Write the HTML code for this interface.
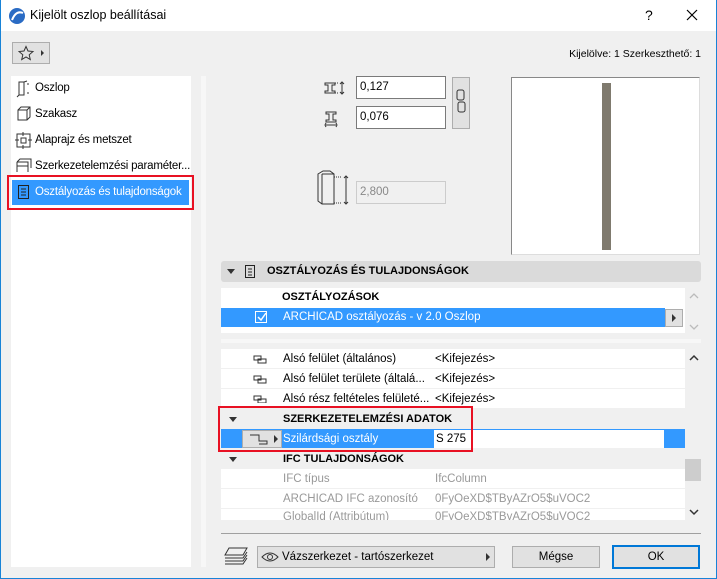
<!DOCTYPE html>
<html><head><meta charset="utf-8"><style>
*{margin:0;padding:0;box-sizing:border-box}
body{width:717px;height:579px;position:relative;overflow:hidden;background:#f0f0f0;font-family:"Liberation Sans","DejaVu Sans",sans-serif;font-size:11.5px;color:#000}
.a{position:absolute}
.win{position:absolute;left:0;top:0;width:717px;height:579px;border:1px solid #1883d7;border-top:none}
.row{position:absolute;left:221px;width:464px;height:20px;line-height:20px;background:#fff;border-bottom:1px solid #f0f0f0;white-space:nowrap}
.sec{background:#f0f0f0;font-weight:bold}
.t{position:absolute;left:62px}
.v{position:absolute;left:214px}
.g{color:#999}
.tri{position:absolute;left:8px;top:8px;width:0;height:0;border-left:4px solid transparent;border-right:4px solid transparent;border-top:5px solid #333}
.inp{position:absolute;background:#fff;border:1px solid #7a7a7a;height:23px;line-height:21px;padding-left:3px;font-size:11.5px}
.btn{position:absolute;background:#e1e1e1;border:1px solid #adadad;height:22px;line-height:20px;text-align:center}
.lt{position:absolute;left:35px;letter-spacing:-0.2px}
</style></head><body>
<div class="a" style="left:0;top:0;width:717px;height:31px;background:#fff"></div>
<svg class="a" style="left:8px;top:7px" width="18" height="18"><circle cx="9" cy="9" r="8" fill="#2a6bc4"/><path d="M4 13 Q8 3 15 6" stroke="#fff" stroke-width="2" fill="none"/></svg>
<div class="a" style="left:30px;top:8px;font-size:12.5px">Kijelölt oszlop beállításai</div>
<div class="a" style="left:645px;top:7px;font-size:14px">?</div>
<svg class="a" style="left:686px;top:9px" width="12" height="12" stroke="#000" stroke-width="1.2"><path d="M1 1L11 11M11 1L1 11"/></svg>
<div class="btn" style="left:12px;top:42px;width:38px;height:22px"></div>
<svg class="a" style="left:18px;top:45px" width="28" height="16" fill="none" stroke="#333"><path d="M8 1.5l2 4.5 5 .5-3.8 3.3 1.1 4.8L8 12l-4.3 2.6 1.1-4.8L1 6.5l5-.5z"/><path d="M23 5v6l3-3z" fill="#333" stroke="none"/></svg>
<div class="a" style="right:16px;top:48px;font-size:10.5px">Kijelölve: 1 Szerkeszthető: 1</div>
<!-- left panel -->
<div class="a" style="left:11px;top:76px;width:180px;height:491px;background:#fff"></div>
<div class="a" style="left:201px;top:76px;width:5px;height:491px;background:#f7f7f7"></div>
<div class="lt" style="top:82px">Oszlop</div>
<div class="lt" style="top:108px">Szakasz</div>
<div class="lt" style="top:134px">Alaprajz és metszet</div>
<div class="lt" style="top:160px">Szerkezetelemzési paraméter...</div>
<svg class="a" style="left:15px;top:80px" width="18" height="100" fill="none" stroke="#333"><path d="M4 2h5v13h-5zM4 15l-2 2M9 2l3-1M13 3v2M13 12v2"/><path d="M3 30l3-3h9v10l-3 3h-9zM3 30h9v10M12 30l3-3"/><rect x="2" y="54" width="13" height="13"/><rect x="6" y="58" width="5" height="5"/><path d="M8 52v4M8 65v4M0 60h4M13 60h4"/><path d="M2 82l3-3h11v9M2 82h11v10M2 82v10M13 86h-11"/></svg>
<div class="a" style="left:7px;top:175px;width:187px;height:35px;border:2px solid #e81123"></div>
<div class="a" style="left:11px;top:179px;width:179px;height:27px;background:#3399ff;border:1px solid #fff"></div>
<svg class="a" style="left:17px;top:184px" width="14" height="16" fill="none" stroke="#222"><rect x="1.5" y="1.5" width="10" height="13"/><path d="M4 5h5M4 8h5M4 11h5"/></svg>
<div class="lt" style="top:186px;color:#fff">Osztályozás és tulajdonságok</div>
<!-- top right -->
<svg class="a" style="left:323px;top:80px" width="28" height="50" fill="none" stroke="#333"><path d="M2 3h10v2h-3v6h3v2h-10v-2h3v-6h-3z"/><path d="M12 3h4M12 13h4" stroke-dasharray="1 1"/><path d="M19 2v12M17 4l2-2 2 2M17 12l2 2 2-2"/><path d="M3 32h10v2h-3v6h3v2h-10v-2h3v-6h-3z"/><path d="M3 45h10M3 43l-1 2 1 2M13 43l1 2-1 2"/></svg>
<div class="inp" style="left:356px;top:76px;width:90px">0,127</div>
<div class="inp" style="left:356px;top:106px;width:90px">0,076</div>
<div class="btn" style="left:452px;top:77px;width:18px;height:52px;background:#e1e1e1"></div>
<svg class="a" style="left:455px;top:89px" width="12" height="24" fill="none" stroke="#333"><rect x="2" y="1" width="7" height="10" rx="2"/><rect x="3" y="13" width="7" height="10" rx="2"/></svg>
<svg class="a" style="left:316px;top:170px" width="36" height="36" fill="none" stroke="#333"><path d="M2 4l5-3h7l4 3v30h-12l-4-3z"/><path d="M6 4h12M6 4v30"/><path d="M18 7h8M18 33h8" stroke-dasharray="1 1"/><path d="M30 6v28M28 8l2-2 2 2M28 32l2 2 2-2"/></svg>
<div class="inp" style="left:356px;top:181px;width:90px;background:#f0f0f0;border-color:#ccc;color:#888">2,800</div>
<div class="a" style="left:511px;top:77px;width:189px;height:178px;background:#fff;border:1px solid #888;border-right-color:#ddd;border-bottom-color:#ddd"></div>
<div class="a" style="left:602px;top:83px;width:9px;height:167px;background:#7f7a6e"></div>
<!-- header -->
<div class="a" style="left:221px;top:261px;width:480px;height:21px;background:#dadada;border-radius:3px"></div>
<div class="tri" style="left:227px;top:269px"></div>
<svg class="a" style="left:244px;top:264px" width="12" height="15" fill="none" stroke="#222"><rect x="1.5" y="1.5" width="9" height="12"/><path d="M4 5h4M4 8h4M4 11h4"/></svg>
<div class="a" style="left:267px;top:265px;font-weight:bold;font-size:11px">OSZTÁLYOZÁS ÉS TULAJDONSÁGOK</div>
<!-- classifications -->
<div class="a" style="left:221px;top:288px;width:464px;height:45px;background:#fff"></div>
<div class="a" style="left:282px;top:291px;font-weight:bold;font-size:11px">OSZTÁLYOZÁSOK</div>
<div class="a" style="left:221px;top:308px;width:444px;height:19px;background:#3399ff"></div>
<div class="a" style="left:255px;top:311px;width:12px;height:12px;border:1px solid #fff"></div>
<svg class="a" style="left:256px;top:312px" width="11" height="11" fill="none" stroke="#fff" stroke-width="1.5"><path d="M2 5l3 3 5-7"/></svg>
<div class="a" style="left:283px;top:311px;color:#fff">ARCHICAD osztályozás - v 2.0 Oszlop</div>
<div class="btn" style="left:665px;top:309px;width:18px;height:18px"></div>
<svg class="a" style="left:670px;top:313px" width="8" height="10"><path d="M2 1v8l4-4z" fill="#333"/></svg>
<svg class="a" style="left:688px;top:292px" width="12" height="40" fill="none" stroke="#bbb" stroke-width="1.3"><path d="M2 6l4-4 4 4M2 33l4 4 4-4"/></svg>
<div class="a" style="left:221px;top:339px;width:480px;height:4px;background:#f7f7f7"></div>
<!-- properties -->
<div class="a" style="left:221px;top:349px;width:464px;height:172px;background:#fff"></div>
<div class="row" style="top:349px"><span class="t">Alsó felület (általános)</span><span class="v">&lt;Kifejezés&gt;</span></div>
<div class="row" style="top:369px"><span class="t">Alsó felület területe (általá...</span><span class="v">&lt;Kifejezés&gt;</span></div>
<div class="row" style="top:389px"><span class="t">Alsó rész feltételes felületé...</span><span class="v">&lt;Kifejezés&gt;</span></div>
<svg class="a" style="left:252px;top:353px" width="18" height="50" fill="none" stroke="#333"><path d="M2 3h7v4h-7zM6 6h8v4h-8z"/><path d="M2 23h7v4h-7zM6 26h8v4h-8z"/><path d="M2 43h7v4h-7zM6 46h8v4h-8z"/></svg>
<div class="row sec" style="top:409px"><div class="tri"></div><span class="t" style="font-size:11px">SZERKEZETELEMZÉSI ADATOK</span></div>
<div class="row" style="top:429px;background:#3399ff;color:#fff"><div class="a" style="left:21px;top:1px;width:40px;height:18px;background:#e1e1e1;border:1px solid #adadad"></div><svg class="a" style="left:28px;top:4px" width="30" height="12" fill="none" stroke="#333"><path d="M1 2h9v6h8v3h-8"/><path d="M25 2l4 4-4 4z" fill="#333" stroke="none"/></svg><span class="t">Szilárdsági osztály</span><div class="a" style="left:213px;top:1px;width:230px;height:18px;background:#fff;color:#000;line-height:18px;padding-left:2px">S 275</div></div>
<div class="row sec" style="top:449px"><div class="tri"></div><span class="t" style="font-size:11px">IFC TULAJDONSÁGOK</span></div>
<div class="row" style="top:469px"><span class="t g">IFC típus</span><span class="v g">IfcColumn</span></div>
<div class="row" style="top:489px"><span class="t g">ARCHICAD IFC azonosító</span><span class="v g">0FyOeXD$TByAZrO5$uVOC2</span></div>
<div class="row" style="top:509px;height:12px;overflow:hidden"><span class="t g" style="top:-2px">GlobalId (Attribútum)</span><span class="v g" style="top:-2px">0FyOeXD$TByAZrO5$uVOC2</span></div>
<svg class="a" style="left:688px;top:352px" width="12" height="12" fill="none" stroke="#333" stroke-width="1.5"><path d="M2 8l4-4 4 4"/></svg>
<div class="a" style="left:685px;top:459px;width:16px;height:22px;background:#cdcdcd"></div>
<svg class="a" style="left:688px;top:506px" width="12" height="12" fill="none" stroke="#333" stroke-width="1.5"><path d="M2 4l4 4 4-4"/></svg>
<div class="a" style="left:218px;top:406px;width:255px;height:46px;border:2px solid #e81123"></div>
<!-- bottom -->
<div class="a" style="left:221px;top:533px;width:480px;height:1px;background:#a0a0a0"></div>
<svg class="a" style="left:223px;top:546px" width="26" height="20" fill="none" stroke="#333"><path d="M6 2h18l-4 7h-18z"/><path d="M2 12h18l4-6M2 15h18l4-6M2 18h18l4-6"/></svg>
<div class="btn" style="left:257px;top:546px;width:238px;text-align:left;padding-left:24px">Vázszerkezet - tartószerkezet</div>
<svg class="a" style="left:261px;top:551px" width="18" height="12" fill="none" stroke="#333"><path d="M1 6Q9 -2 17 6Q9 14 1 6z"/><circle cx="9" cy="6" r="2.5"/></svg>
<svg class="a" style="left:484px;top:552px" width="8" height="10"><path d="M2 1v8l4-4z" fill="#333"/></svg>
<div class="btn" style="left:512px;top:546px;width:88px">Mégse</div>
<div class="btn" style="left:612px;top:545px;width:88px;height:24px;border:2px solid #0078d7">OK</div>
<div class="win"></div>
</body></html>
